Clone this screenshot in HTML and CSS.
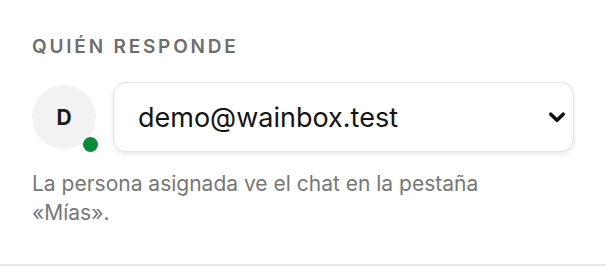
FILE: index.html
```html
<!DOCTYPE html>
<html lang="es">
<head>
    <meta charset="UTF-8">
    <meta name="viewport" content="width=device-width, initial-scale=1.0">
    <title>Quién responde</title>
    <link rel="stylesheet" href="styles.css">
</head>
<body>

<div class="assign-panel">
    <div class="section-label">Quién responde</div>

    <div class="assign-row">
        <div class="avatar">
            D
            <span class="status-dot"></span>
        </div>
        <div class="select-wrap">
            <select class="agent-select">
                <option>demo@wainbox.test</option>
            </select>
            <svg class="chevron" width="20" height="20" viewBox="0 0 20 20">
                <path d="M3.8 6.2 L10 12.2 L16.2 6.2" fill="none" stroke="#111" stroke-width="3.6" stroke-linecap="round" stroke-linejoin="round"/>
            </svg>
        </div>
    </div>

    <p class="hint">La persona asignada ve el chat en la pestaña «Mías».</p>
</div>

</body>
</html>
```

FILE: styles.css
```css
body {
    margin: 0;
    background: #fff;
    font-family: Inter, "Noto Sans", sans-serif;
}
.assign-panel {
    height: 266px;
    box-sizing: border-box;
    padding: 35px 32px 0 32px;
    border-bottom: 2px solid #e6e6e6;
}
.section-label {
    font-size: 19px;
    font-weight: 600;
    letter-spacing: 2.8px;
    text-transform: uppercase;
    color: #6e6e6e;
    line-height: 24px;
}
.assign-row {
    display: flex;
    align-items: center;
    gap: 17px;
    margin-top: 23px;
}
.avatar {
    position: relative;
    flex: none;
    width: 64px;
    height: 64px;
    border-radius: 50%;
    background: #f2f2f2;
    display: flex;
    align-items: center;
    justify-content: center;
    font-size: 21px;
    font-weight: 700;
    color: #1a1a1a;
}
.status-dot {
    position: absolute;
    right: -4px;
    bottom: -5px;
    width: 15px;
    height: 15px;
    border-radius: 50%;
    background: #0b8a3b;
    border: 2px solid #fff;
}
.select-wrap {
    position: relative;
    flex: 1;
}
.agent-select {
    width: 100%;
    height: 70px;
    appearance: none;
    -webkit-appearance: none;
    border: 1.5px solid #e2e2e2;
    border-radius: 13px;
    background: #fff;
    box-shadow: 0 2px 5px rgba(0, 0, 0, 0.09);
    padding: 0 24px;
    font-family: Inter, "Noto Sans", sans-serif;
    font-size: 27px;
    color: #151515;
}
.chevron {
    position: absolute;
    right: 7px;
    top: 26px;
    pointer-events: none;
}
.hint {
    max-width: 490px;
    margin: 17px 0 0 0;
    font-size: 21px;
    line-height: 29px;
    color: #777;
}
```
